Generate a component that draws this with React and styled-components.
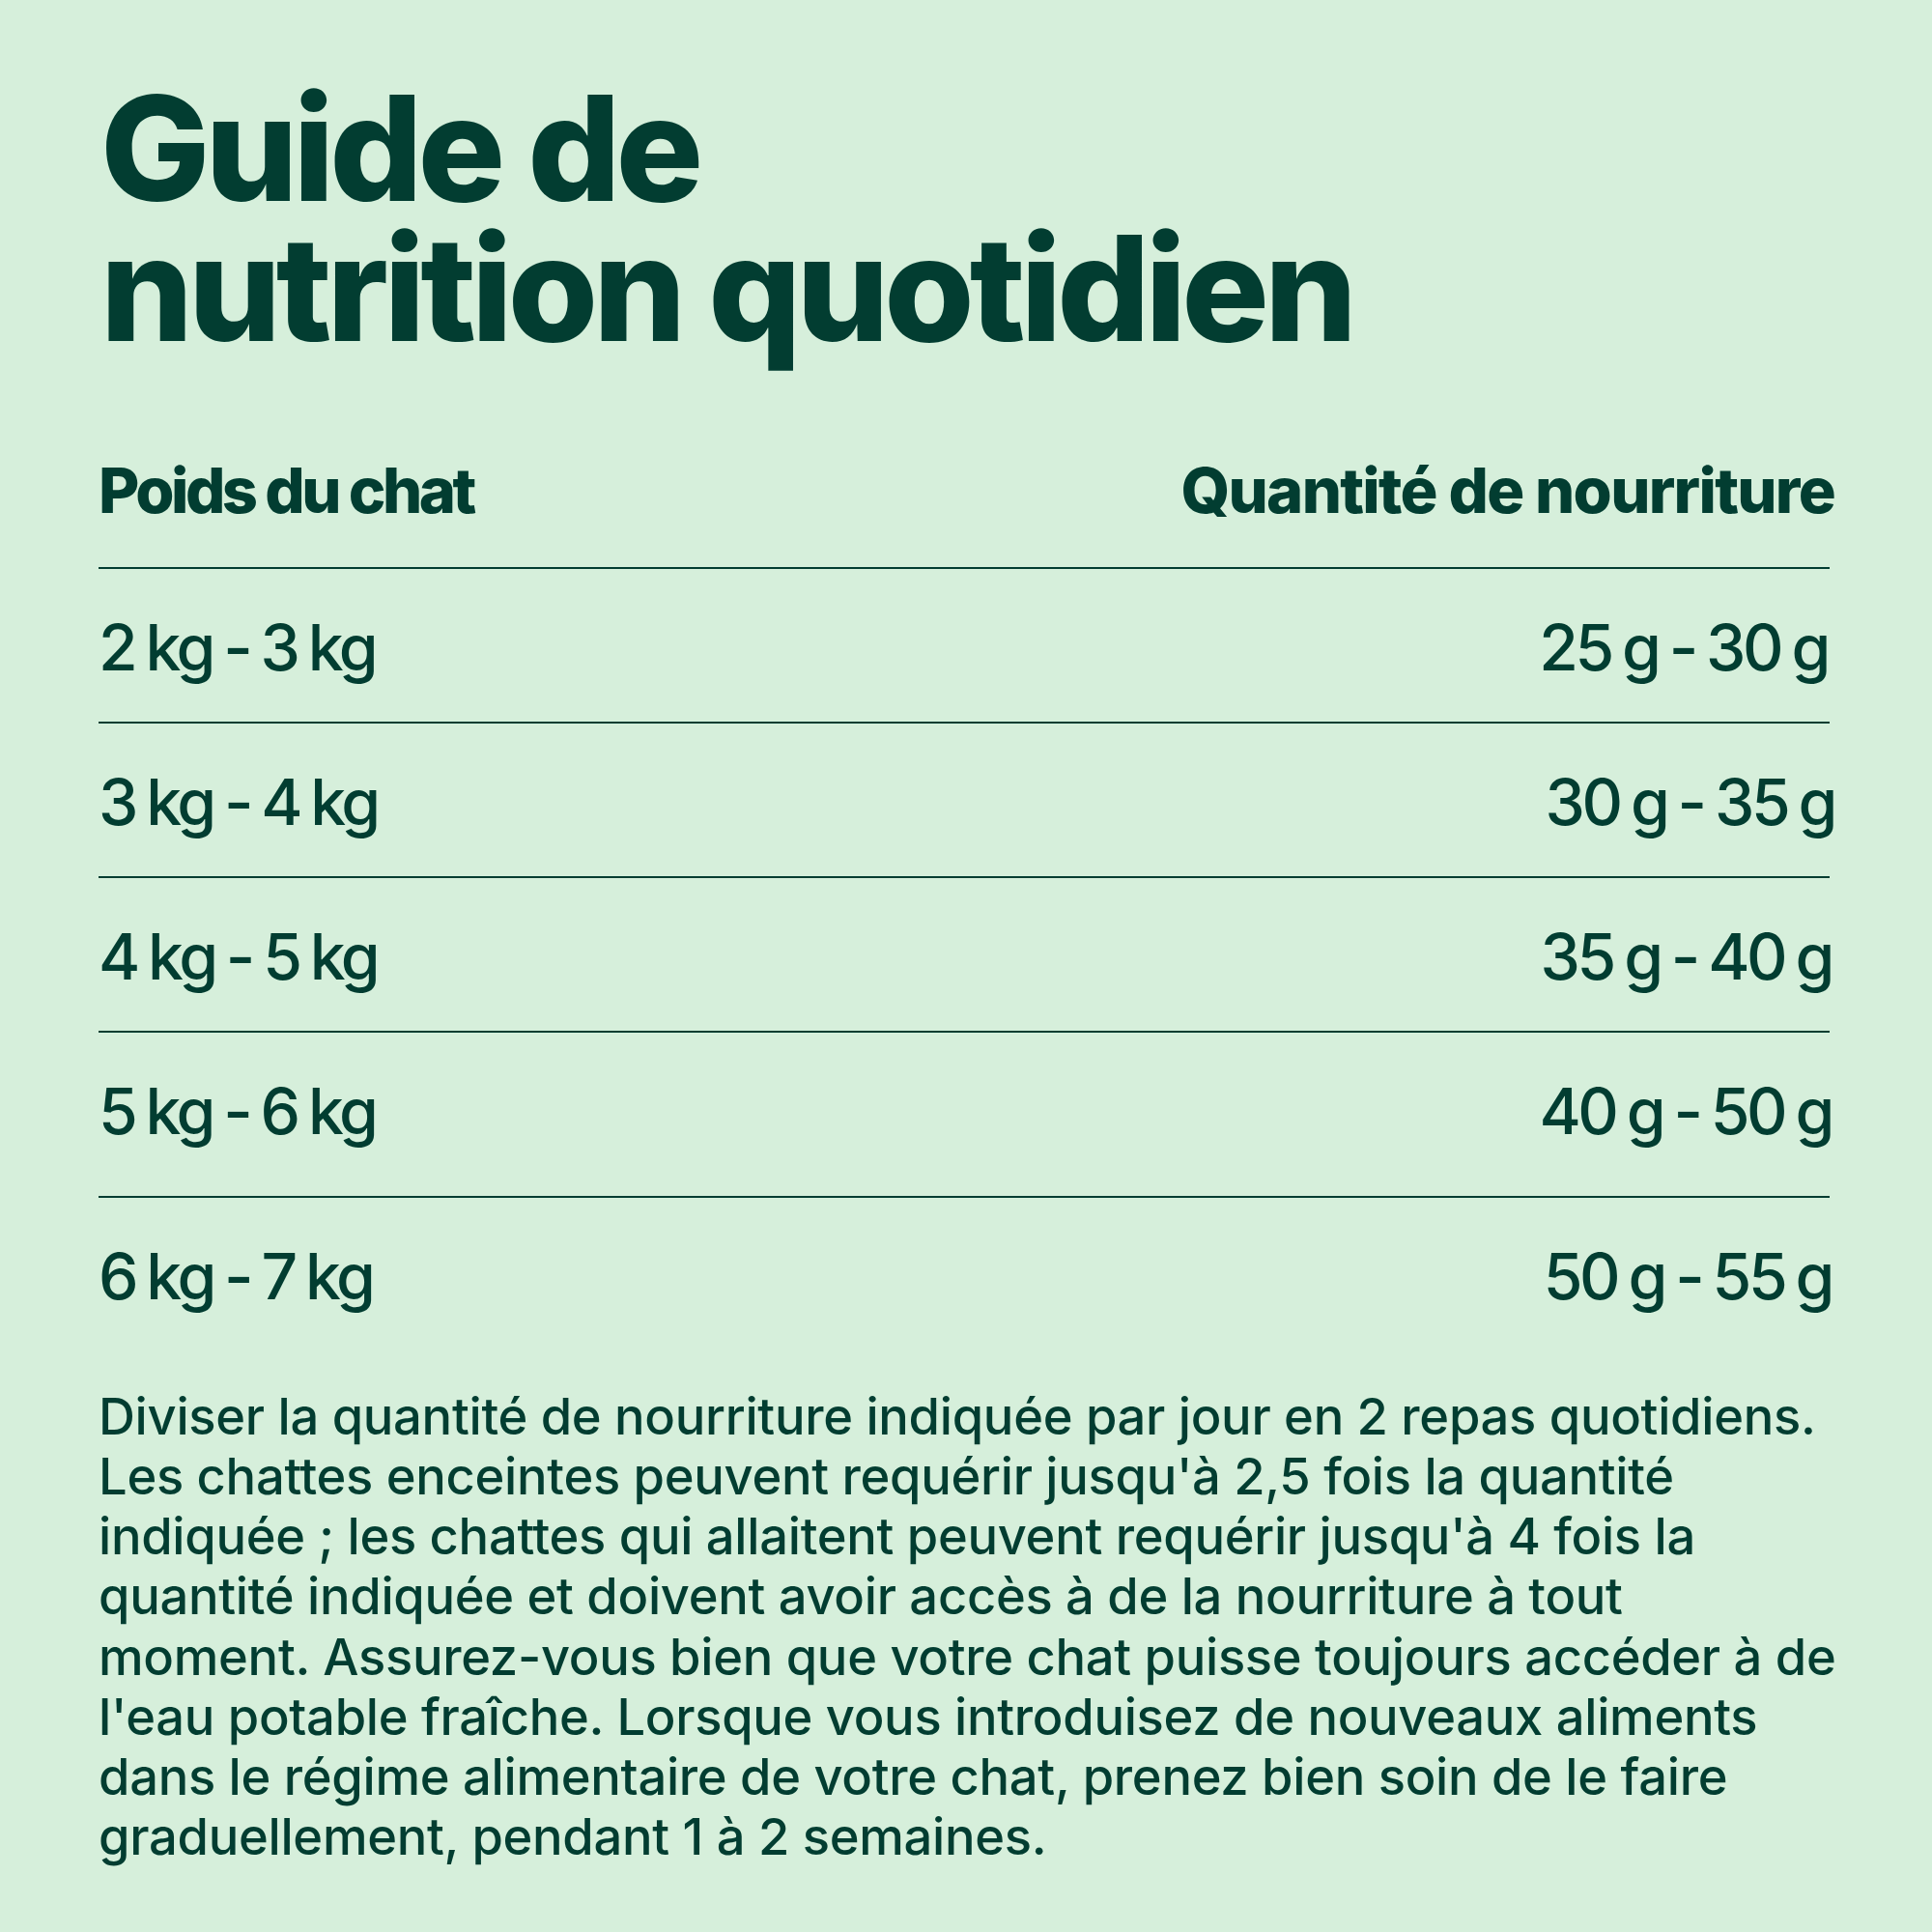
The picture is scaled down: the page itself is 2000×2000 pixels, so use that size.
import React from "react"
import styled, { createGlobalStyle } from "styled-components"

const GlobalStyle = createGlobalStyle`
  html, body {
    margin: 0;
    padding: 0;
    background: #d6efdb;
  }
  body {
    font-family: Inter, "Noto Sans", sans-serif;
    color: #023d31;
  }
`

const rows = [
  { weight: "2 kg - 3 kg", food: "25 g - 30 g", shift: -4 },
  { weight: "3 kg - 4 kg", food: "30 g - 35 g", shift: 3 },
  { weight: "4 kg - 5 kg", food: "35 g - 40 g", shift: 0 },
  { weight: "5 kg - 6 kg", food: "40 g - 50 g", shift: 0, tall: true },
  { weight: "6 kg - 7 kg", food: "50 g - 55 g", shift: 0 },
]

const notes = [
  "Diviser la quantité de nourriture indiquée par jour en 2 repas quotidiens.",
  "Les chattes enceintes peuvent requérir jusqu'à 2,5 fois la quantité",
  "indiquée ; les chattes qui allaitent peuvent requérir jusqu'à 4 fois la",
  "quantité indiquée et doivent avoir accès à de la nourriture à tout",
  "moment. Assurez-vous bien que votre chat puisse toujours accéder à de",
  "l'eau potable fraîche. Lorsque vous introduisez de nouveaux aliments",
  "dans le régime alimentaire de votre chat, prenez bien soin de le faire",
  "graduellement, pendant 1 à 2 semaines.",
]

const App = () => {
  return (
    <Page>
      <GlobalStyle />
      <Title>
        <TitleLine>Guide de</TitleLine>
        <TitleLine>nutrition quotidien</TitleLine>
      </Title>

      <Table>
        <HeadRow>
          <HeadCell>Poids du chat</HeadCell>
          <HeadCell $right>Quantité de nourriture</HeadCell>
        </HeadRow>
        {rows.map((r, i) => (
          <Row key={r.weight} $tall={r.tall} $last={i === rows.length - 1}>
            <Cell>{r.weight}</Cell>
            <Cell style={{ marginRight: -2 - r.shift }}>{r.food}</Cell>
          </Row>
        ))}
      </Table>

      <Notes>
        {notes.map((line) => (
          <NoteLine key={line}>{line}</NoteLine>
        ))}
      </Notes>
    </Page>
  )
}

const Page = styled.div`
  width: 2000px;
  height: 2000px;
  box-sizing: border-box;
  padding: 81px 106px 0 102px;
  background: #d6efdb;
  overflow: hidden;
`

const Title = styled.h1`
  margin: 0 0 0 2px;
  font-size: 151px;
  font-weight: 800;
  letter-spacing: -5px;
`

const TitleLine = styled.span`
  display: block;
  height: 145px;
  line-height: 145px;
  white-space: nowrap;
`

const Table = styled.div`
  margin-top: 97px;
  display: flex;
  flex-direction: column;
`

const HeadRow = styled.div`
  display: flex;
  justify-content: space-between;
  padding-bottom: 39px;
  border-bottom: 2px solid #023d31;
`

const HeadCell = styled.div`
  font-size: 65px;
  line-height: 80px;
  font-weight: 800;
  letter-spacing: ${(p) => (p.$right ? "-1.7px" : "-3.5px")};
  margin-right: ${(p) => (p.$right ? "-5px" : "0")};
`

const Row = styled.div`
  display: flex;
  justify-content: space-between;
  padding-top: 41px;
  padding-bottom: ${(p) => (p.$tall ? "48px" : "37px")};
  border-bottom: ${(p) => (p.$last ? "none" : "2px solid #023d31")};
`

const Cell = styled.div`
  font-size: 66px;
  line-height: 80px;
  font-weight: 500;
  letter-spacing: -3.4px;
  word-spacing: -3px;
`

const Notes = styled.p`
  margin: 37px 0 0;
  font-size: 52.5px;
  line-height: 62.14px;
  font-weight: 500;
  letter-spacing: -0.3px;
`

const NoteLine = styled.span`
  display: block;
  white-space: nowrap;
`

export default App
